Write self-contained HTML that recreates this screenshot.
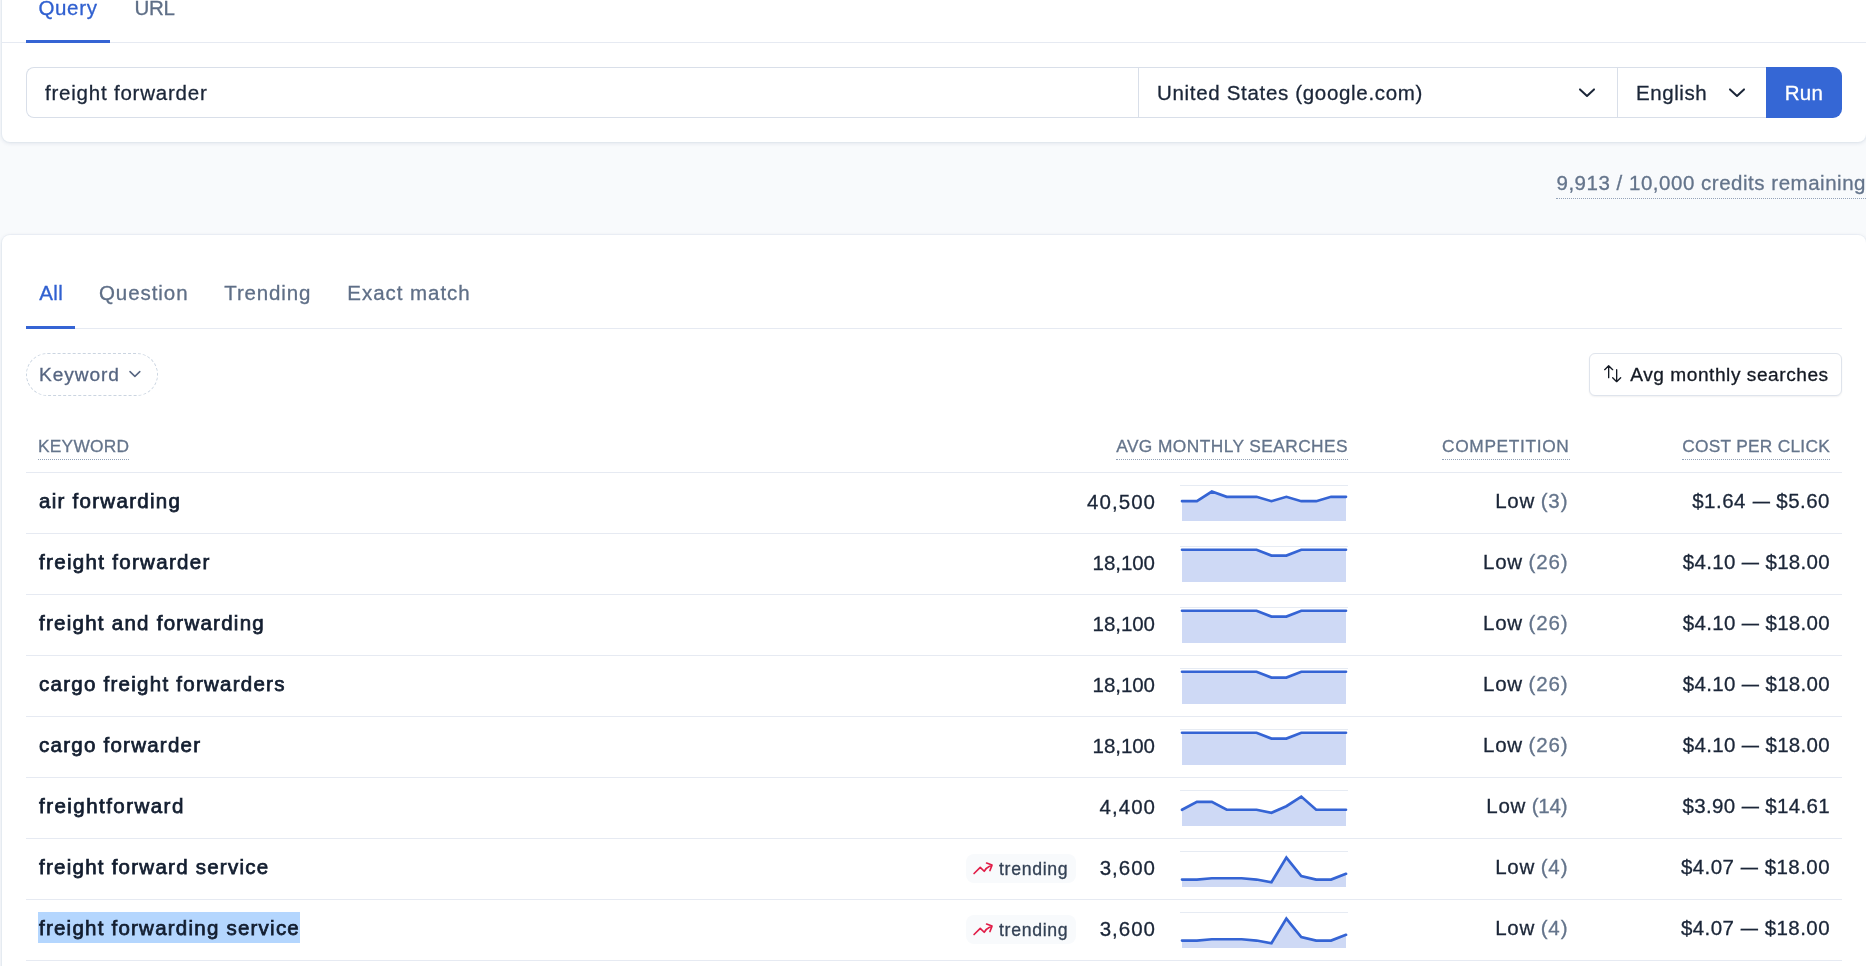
<!DOCTYPE html>
<html lang="en">
<head>
<meta charset="utf-8">
<title>Keyword research</title>
<style>
*{box-sizing:border-box;}
html,body{margin:0;padding:0;}
body{width:1866px;height:966px;overflow:hidden;background:#f8fafc;font-family:"Liberation Sans",Arial,sans-serif;font-size:20.5px;color:#1b2638;}
.page{position:relative;width:1866px;height:966px;overflow:hidden;will-change:transform;-webkit-text-stroke:.3px;}
.card{position:absolute;left:2px;width:1864px;background:#fff;border-radius:8px;box-shadow:0 0 0 1px rgba(214,224,236,.3),0 1px 4px rgba(30,55,100,.13);}
.search-card{top:-40px;height:182px;padding:0 24px;}
.results-card{top:235px;height:800px;padding:0 24px;}
.tabs{display:flex;border-bottom:1px solid #e6eaf2;}
.tab{display:block;padding:0;text-align:center;margin-right:12.5px;color:#5f6f87;border-bottom:3px solid transparent;margin-bottom:-1px;white-space:nowrap;text-decoration:none;}
.tab.on{color:#3060d0;border-bottom-color:#3564d4;}
.search-card .tabs{height:83px;padding:33px 24px 0;margin:0 -24px;}
.search-card .tab{height:50px;line-height:30px;}
.results-card .tabs{height:94px;padding-top:41px;}
.results-card .tab{height:53px;line-height:34px;}
.searchrow{display:flex;margin-top:24px;height:51px;}
.field{height:51px;border:1px solid #d9dfe9;border-right:0;background:#fff;display:flex;align-items:center;position:relative;white-space:nowrap;}
.field.q{width:1112px;border-radius:8px 0 0 8px;padding-left:18px;}
.field.country{width:479px;padding-left:18px;}
.field.lang{width:149px;padding-left:18px;}
.field .chev{position:absolute;top:50%;margin-top:-6px;}
.run{width:76px;height:51px;border:0;border-radius:0 9px 9px 0;background:#3567d5;color:#fff;font:inherit;padding:0;text-align:center;line-height:51px;}
.credits{position:absolute;right:0;top:167px;line-height:31px;color:#64748b;border-bottom:1px dotted #94a3b8;white-space:nowrap;}
.toolbar{display:flex;justify-content:space-between;margin-top:24px;height:43px;}
.pill{height:43px;width:132px;border:1px dashed #cbd5e1;border-radius:22px;color:#566581;font-size:19.1px;display:flex;align-items:center;padding-left:12px;white-space:nowrap;}
.pill svg{margin-left:9px;position:relative;top:-1px;}
.sort{height:43px;width:253px;border:1px solid #dfe4ec;border-radius:6px;color:#141a24;font-size:19.1px;display:flex;align-items:center;padding-left:12px;background:#fff;box-shadow:0 1px 2px rgba(15,23,42,.06);white-space:nowrap;}
.sort svg{margin-right:7px;position:relative;top:-1px;}
.kwtable{border-collapse:collapse;width:1816px;margin-top:23px;table-layout:fixed;}
.kwtable th{height:53px;border-bottom:1px solid #e6eaf2;font-weight:400;font-size:17.33px;color:#64748b;padding:0 12px;vertical-align:top;padding-top:14px;line-height:24px;}
.kwtable th .hd{display:inline-block;border-bottom:1px dotted #94a3b8;line-height:26px;}
.kwtable td{height:61px;border-bottom:1px solid #e6eaf2;padding:12px 12px 0;vertical-align:top;line-height:30px;white-space:nowrap;}
.kwtable .kw{text-align:left;width:900px;}
.kwtable .vol{text-align:right;width:434px;}
.kwtable .comp{text-align:right;width:220px;}
.kwtable .cpc{text-align:right;width:262px;}
td.kw{font-weight:400;-webkit-text-stroke:.75px #131e30;color:#131e30;}
td.kw>span{position:relative;top:1px;left:1px;}
td.kw .sel{background:#b4d6fe;display:inline-block;margin:-1px 0 0 -1px;padding:1px 0 0 1px;}
.volwrap{display:flex;justify-content:flex-end;align-items:center;height:36px;}
.num{margin-right:calc(25px - var(--ls));position:relative;top:-1px;}
.spark{display:block;flex:none;}
.badge{display:inline-flex;align-items:center;height:29px;width:110px;background:#f8fafc;border-radius:8px;margin-right:24px;padding-left:6px;font-size:17.7px;color:#334155;position:relative;top:0;}
.badge .bt{margin-left:5.3px;}
.badge .ti{position:relative;top:-.3px;left:.3px;}
.cn{color:#64748b;}
.ls{letter-spacing:var(--ls);}
.md{display:inline-block;transform:scaleX(.84);margin:0 -1.5px;}
td.comp>span,td.cpc>span{position:relative;top:1px;}
td.comp .cn{margin-right:calc(.5px - var(--ls));}

</style>
</head>
<body>
<div class="page">
  <section class="card search-card">
    <nav class="tabs">
      <a class="tab on" style="width:84px"><span class="ls" style="--ls:0.67px">Query</span></a>
      <a class="tab" style="width:64px"><span class="ls" style="--ls:-0.3px">URL</span></a>
    </nav>
    <div class="searchrow">
      <div class="field q"><span class="val ls" style="--ls:0.78px">freight forwarder</span></div>
      <div class="field country"><span class="val ls" style="--ls:0.68px">United States (google.com)</span>
        <svg class="chev" style="right:21px" width="18" height="12" viewBox="0 0 18 12" fill="none" stroke="#1b2638" stroke-width="2" stroke-linecap="round" stroke-linejoin="round"><path d="M2 2.4 9 8.9 16 2.4"/></svg>
      </div>
      <div class="field lang"><span class="val ls" style="--ls:0.57px">English</span>
        <svg class="chev" style="right:20px" width="18" height="12" viewBox="0 0 18 12" fill="none" stroke="#1b2638" stroke-width="2" stroke-linecap="round" stroke-linejoin="round"><path d="M2 2.4 9 8.9 16 2.4"/></svg>
      </div>
      <button class="run" type="button"><span class="ls" style="--ls:0.3px">Run</span></button>
    </div>
  </section>
  <div class="credits"><span class="ls" style="--ls:0.52px">9,913 / 10,000 credits remaining</span></div>
  <section class="card results-card">
    <nav class="tabs">
      <a class="tab on" style="width:49px;padding-left:1.5px"><span class="ls" style="--ls:0.4px">All</span></a>
      <a class="tab" style="width:112.5px"><span class="ls" style="--ls:0.95px">Question</span></a>
      <a class="tab" style="width:110.5px"><span class="ls" style="--ls:0.85px">Trending</span></a>
      <a class="tab" style="width:147px"><span class="ls" style="--ls:0.96px">Exact match</span></a>
    </nav>
    <div class="toolbar">
      <div class="pill"><span class="ls" style="--ls:0.95px">Keyword</span>
        <svg width="12" height="8" viewBox="0 0 12 8" fill="none" stroke="#566581" stroke-width="1.5" stroke-linecap="round" stroke-linejoin="round"><path d="M1 1.6 5.9 6.4 10.8 1.6"/></svg>
      </div>
      <div class="sort">
        <svg width="21.33" height="21.33" viewBox="0 0 24 24" fill="none" stroke="#141a24" stroke-width="1.5" stroke-linecap="round" stroke-linejoin="round"><path d="M3 7.5 7.5 3m0 0L12 7.5M7.5 3v13.5m13.5 0L16.5 21m0 0L12 16.5m4.5 4.5V7.5"/></svg>
        <span class="ls" style="--ls:0.54px">Avg monthly searches</span>
      </div>
    </div>

    <table class="kwtable">
      <thead>
        <tr>
          <th class="kw"><span class="hd ls" style="--ls:.25px">KEYWORD</span></th>
          <th class="vol"><span class="hd ls" style="--ls:.42px">AVG MONTHLY SEARCHES</span></th>
          <th class="comp"><span class="hd ls" style="--ls:.65px;margin-right:-1.5px">COMPETITION</span></th>
          <th class="cpc"><span class="hd ls" style="--ls:.26px">COST PER CLICK</span></th>
        </tr>
      </thead>
      <tbody>
      <tr>
        <td class="kw"><span class="ls" style="--ls:1.28px">air forwarding</span></td>
        <td class="vol"><div class="volwrap"><span class="num ls" style="--ls:1.05px">40,500</span><svg class="spark" width="168" height="36" viewBox="0 0 168 36" aria-hidden="true"><line x1="0" y1="0.5" x2="168" y2="0.5" stroke="#e6ebf3" stroke-width="1"/><path d="M2.00,36 L2.00,16.18 L16.91,16.18 L31.82,6.56 L46.73,11.84 L61.64,11.84 L76.55,11.84 L91.45,16.18 L106.36,11.84 L121.27,16.18 L136.18,16.18 L151.09,11.84 L166.00,11.84 L166.00,36 Z" fill="#ced9f5"/><polyline points="2.00,16.18 16.91,16.18 31.82,6.56 46.73,11.84 61.64,11.84 76.55,11.84 91.45,16.18 106.36,11.84 121.27,16.18 136.18,16.18 151.09,11.84 166.00,11.84" fill="none" stroke="#3564d4" stroke-width="2.67" stroke-linecap="round" stroke-linejoin="miter"/></svg></div></td>
        <td class="comp"><span class="lv ls" style="--ls:.7px">Low</span> <span class="cn ls" style="--ls:0.9px">(3)</span></td>
        <td class="cpc"><span class="ls" style="--ls:0.48px">$1.64 <span class="md">—</span> $5.60</span></td>
      </tr>
      <tr>
        <td class="kw"><span class="ls" style="--ls:1.32px">freight forwarder</span></td>
        <td class="vol"><div class="volwrap"><span class="num ls" style="--ls:-0.05px">18,100</span><svg class="spark" width="168" height="36" viewBox="0 0 168 36" aria-hidden="true"><line x1="0" y1="0.5" x2="168" y2="0.5" stroke="#e6ebf3" stroke-width="1"/><path d="M2.00,36 L2.00,3.74 L16.91,3.74 L31.82,3.74 L46.73,3.74 L61.64,3.74 L76.55,3.74 L91.45,9.55 L106.36,9.55 L121.27,3.74 L136.18,3.74 L151.09,3.74 L166.00,3.74 L166.00,36 Z" fill="#ced9f5"/><polyline points="2.00,3.74 16.91,3.74 31.82,3.74 46.73,3.74 61.64,3.74 76.55,3.74 91.45,9.55 106.36,9.55 121.27,3.74 136.18,3.74 151.09,3.74 166.00,3.74" fill="none" stroke="#3564d4" stroke-width="2.67" stroke-linecap="round" stroke-linejoin="miter"/></svg></div></td>
        <td class="comp"><span class="lv ls" style="--ls:.7px">Low</span> <span class="cn ls" style="--ls:0.85px">(26)</span></td>
        <td class="cpc"><span class="ls" style="--ls:0.31px">$4.10 <span class="md">—</span> $18.00</span></td>
      </tr>
      <tr>
        <td class="kw"><span class="ls" style="--ls:1.26px">freight and forwarding</span></td>
        <td class="vol"><div class="volwrap"><span class="num ls" style="--ls:-0.05px">18,100</span><svg class="spark" width="168" height="36" viewBox="0 0 168 36" aria-hidden="true"><line x1="0" y1="0.5" x2="168" y2="0.5" stroke="#e6ebf3" stroke-width="1"/><path d="M2.00,36 L2.00,3.74 L16.91,3.74 L31.82,3.74 L46.73,3.74 L61.64,3.74 L76.55,3.74 L91.45,9.55 L106.36,9.55 L121.27,3.74 L136.18,3.74 L151.09,3.74 L166.00,3.74 L166.00,36 Z" fill="#ced9f5"/><polyline points="2.00,3.74 16.91,3.74 31.82,3.74 46.73,3.74 61.64,3.74 76.55,3.74 91.45,9.55 106.36,9.55 121.27,3.74 136.18,3.74 151.09,3.74 166.00,3.74" fill="none" stroke="#3564d4" stroke-width="2.67" stroke-linecap="round" stroke-linejoin="miter"/></svg></div></td>
        <td class="comp"><span class="lv ls" style="--ls:.7px">Low</span> <span class="cn ls" style="--ls:0.85px">(26)</span></td>
        <td class="cpc"><span class="ls" style="--ls:0.31px">$4.10 <span class="md">—</span> $18.00</span></td>
      </tr>
      <tr>
        <td class="kw"><span class="ls" style="--ls:1.26px">cargo freight forwarders</span></td>
        <td class="vol"><div class="volwrap"><span class="num ls" style="--ls:-0.05px">18,100</span><svg class="spark" width="168" height="36" viewBox="0 0 168 36" aria-hidden="true"><line x1="0" y1="0.5" x2="168" y2="0.5" stroke="#e6ebf3" stroke-width="1"/><path d="M2.00,36 L2.00,3.74 L16.91,3.74 L31.82,3.74 L46.73,3.74 L61.64,3.74 L76.55,3.74 L91.45,9.55 L106.36,9.55 L121.27,3.74 L136.18,3.74 L151.09,3.74 L166.00,3.74 L166.00,36 Z" fill="#ced9f5"/><polyline points="2.00,3.74 16.91,3.74 31.82,3.74 46.73,3.74 61.64,3.74 76.55,3.74 91.45,9.55 106.36,9.55 121.27,3.74 136.18,3.74 151.09,3.74 166.00,3.74" fill="none" stroke="#3564d4" stroke-width="2.67" stroke-linecap="round" stroke-linejoin="miter"/></svg></div></td>
        <td class="comp"><span class="lv ls" style="--ls:.7px">Low</span> <span class="cn ls" style="--ls:0.85px">(26)</span></td>
        <td class="cpc"><span class="ls" style="--ls:0.31px">$4.10 <span class="md">—</span> $18.00</span></td>
      </tr>
      <tr>
        <td class="kw"><span class="ls" style="--ls:1.25px">cargo forwarder</span></td>
        <td class="vol"><div class="volwrap"><span class="num ls" style="--ls:-0.05px">18,100</span><svg class="spark" width="168" height="36" viewBox="0 0 168 36" aria-hidden="true"><line x1="0" y1="0.5" x2="168" y2="0.5" stroke="#e6ebf3" stroke-width="1"/><path d="M2.00,36 L2.00,3.74 L16.91,3.74 L31.82,3.74 L46.73,3.74 L61.64,3.74 L76.55,3.74 L91.45,9.55 L106.36,9.55 L121.27,3.74 L136.18,3.74 L151.09,3.74 L166.00,3.74 L166.00,36 Z" fill="#ced9f5"/><polyline points="2.00,3.74 16.91,3.74 31.82,3.74 46.73,3.74 61.64,3.74 76.55,3.74 91.45,9.55 106.36,9.55 121.27,3.74 136.18,3.74 151.09,3.74 166.00,3.74" fill="none" stroke="#3564d4" stroke-width="2.67" stroke-linecap="round" stroke-linejoin="miter"/></svg></div></td>
        <td class="comp"><span class="lv ls" style="--ls:.7px">Low</span> <span class="cn ls" style="--ls:0.85px">(26)</span></td>
        <td class="cpc"><span class="ls" style="--ls:0.31px">$4.10 <span class="md">—</span> $18.00</span></td>
      </tr>
      <tr>
        <td class="kw"><span class="ls" style="--ls:1.46px">freightforward</span></td>
        <td class="vol"><div class="volwrap"><span class="num ls" style="--ls:1.05px">4,400</span><svg class="spark" width="168" height="36" viewBox="0 0 168 36" aria-hidden="true"><line x1="0" y1="0.5" x2="168" y2="0.5" stroke="#e6ebf3" stroke-width="1"/><path d="M2.00,36 L2.00,19.76 L16.91,11.84 L31.82,11.84 L46.73,19.76 L61.64,19.76 L76.55,19.76 L91.45,22.84 L106.36,16.24 L121.27,6.56 L136.18,19.76 L151.09,19.76 L166.00,19.76 L166.00,36 Z" fill="#ced9f5"/><polyline points="2.00,19.76 16.91,11.84 31.82,11.84 46.73,19.76 61.64,19.76 76.55,19.76 91.45,22.84 106.36,16.24 121.27,6.56 136.18,19.76 151.09,19.76 166.00,19.76" fill="none" stroke="#3564d4" stroke-width="2.67" stroke-linecap="round" stroke-linejoin="miter"/></svg></div></td>
        <td class="comp"><span class="lv ls" style="--ls:.7px">Low</span> <span class="cn ls" style="--ls:-0.25px">(14)</span></td>
        <td class="cpc"><span class="ls" style="--ls:0.33px">$3.90 <span class="md">—</span> $14.61</span></td>
      </tr>
      <tr>
        <td class="kw"><span class="ls" style="--ls:1.25px">freight forward service</span></td>
        <td class="vol"><div class="volwrap"><span class="badge"><svg class="ti" width="22" height="22" viewBox="0 0 24 24" fill="none" stroke="#e11d48" stroke-width="1.8" stroke-linecap="round" stroke-linejoin="round"><path d="M2.25 18 9 11.25l4.306 4.306a11.95 11.95 0 0 1 5.814-5.518l2.74-1.22m0 0-5.94-2.281m5.94 2.28-2.28 5.941"/></svg><span class="bt ls" style="--ls:.68px">trending</span></span><span class="num ls" style="--ls:1.0px">3,600</span><svg class="spark" width="168" height="36" viewBox="0 0 168 36" aria-hidden="true"><line x1="0" y1="0.5" x2="168" y2="0.5" stroke="#e6ebf3" stroke-width="1"/><path d="M2.00,36 L2.00,28.56 L16.91,28.56 L31.82,27.24 L46.73,27.24 L61.64,27.24 L76.55,28.56 L91.45,31.20 L106.36,6.56 L121.27,25.04 L136.18,28.56 L151.09,28.56 L166.00,22.84 L166.00,36 Z" fill="#ced9f5"/><polyline points="2.00,28.56 16.91,28.56 31.82,27.24 46.73,27.24 61.64,27.24 76.55,28.56 91.45,31.20 106.36,6.56 121.27,25.04 136.18,28.56 151.09,28.56 166.00,22.84" fill="none" stroke="#3564d4" stroke-width="2.67" stroke-linecap="round" stroke-linejoin="miter"/></svg></div></td>
        <td class="comp"><span class="lv ls" style="--ls:.7px">Low</span> <span class="cn ls" style="--ls:0.9px">(4)</span></td>
        <td class="cpc"><span class="ls" style="--ls:0.44px">$4.07 <span class="md">—</span> $18.00</span></td>
      </tr>
      <tr>
        <td class="kw"><span class="ls sel" style="--ls:1.23px">freight forwarding service</span></td>
        <td class="vol"><div class="volwrap"><span class="badge"><svg class="ti" width="22" height="22" viewBox="0 0 24 24" fill="none" stroke="#e11d48" stroke-width="1.8" stroke-linecap="round" stroke-linejoin="round"><path d="M2.25 18 9 11.25l4.306 4.306a11.95 11.95 0 0 1 5.814-5.518l2.74-1.22m0 0-5.94-2.281m5.94 2.28-2.28 5.941"/></svg><span class="bt ls" style="--ls:.68px">trending</span></span><span class="num ls" style="--ls:1.0px">3,600</span><svg class="spark" width="168" height="36" viewBox="0 0 168 36" aria-hidden="true"><line x1="0" y1="0.5" x2="168" y2="0.5" stroke="#e6ebf3" stroke-width="1"/><path d="M2.00,36 L2.00,28.56 L16.91,28.56 L31.82,27.24 L46.73,27.24 L61.64,27.24 L76.55,28.56 L91.45,31.20 L106.36,6.56 L121.27,25.04 L136.18,28.56 L151.09,28.56 L166.00,22.84 L166.00,36 Z" fill="#ced9f5"/><polyline points="2.00,28.56 16.91,28.56 31.82,27.24 46.73,27.24 61.64,27.24 76.55,28.56 91.45,31.20 106.36,6.56 121.27,25.04 136.18,28.56 151.09,28.56 166.00,22.84" fill="none" stroke="#3564d4" stroke-width="2.67" stroke-linecap="round" stroke-linejoin="miter"/></svg></div></td>
        <td class="comp"><span class="lv ls" style="--ls:.7px">Low</span> <span class="cn ls" style="--ls:0.9px">(4)</span></td>
        <td class="cpc"><span class="ls" style="--ls:0.44px">$4.07 <span class="md">—</span> $18.00</span></td>
      </tr>
      </tbody>
    </table>
  </section>
</div>
</body>
</html>
